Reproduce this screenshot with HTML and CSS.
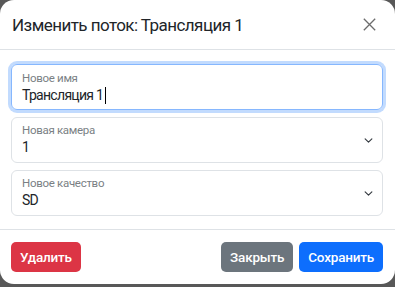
FILE: index.html
```html
<!DOCTYPE html>
<html lang="ru">
<head>
    <meta charset="UTF-8">
    <meta name="viewport" content="width=device-width, initial-scale=1.0">
    <title>Изменить поток</title>
    <link rel="stylesheet" href="styles.css">
</head>
<body>
    <div class="modal">
        <div class="modal-header">
            <h5 class="modal-title">Изменить поток: Трансляция 1</h5>
            <span class="btn-close">
                <svg width="13" height="13" viewBox="0 0 16 16"><path d="M1 1L15 15M15 1L1 15" stroke="#6c6c6c" stroke-width="1.6" fill="none"/></svg>
            </span>
        </div>
        <div class="modal-body">
            <div class="field focused">
                <label>Новое имя</label>
                <div class="value">Трансляция 1<span class="caret"></span></div>
            </div>
            <div class="field select">
                <div>
                    <label>Новая камера</label>
                    <div class="value">1</div>
                </div>
                <svg class="chevron" width="9" height="9" viewBox="0 0 16 16"><path d="M2 5l6 6 6-6" stroke="#343a40" stroke-width="2" fill="none" stroke-linecap="round" stroke-linejoin="round"/></svg>
            </div>
            <div class="field select">
                <div>
                    <label>Новое качество</label>
                    <div class="value">SD</div>
                </div>
                <svg class="chevron" width="9" height="9" viewBox="0 0 16 16"><path d="M2 5l6 6 6-6" stroke="#343a40" stroke-width="2" fill="none" stroke-linecap="round" stroke-linejoin="round"/></svg>
            </div>
        </div>
        <div class="modal-footer">
            <button class="btn btn-danger">Удалить</button>
            <div class="spacer"></div>
            <button class="btn btn-secondary">Закрыть</button>
            <button class="btn btn-primary">Сохранить</button>
        </div>
    </div>
</body>
</html>
```

FILE: styles.css
```css
body {
    margin: 0;
    background: #585858;
    font-family: Roboto, "Noto Sans", sans-serif;
    color: #212529;
}
.modal {
    width: 395px;
    height: 284px;
    background: #fff;
    border-radius: 14px;
    overflow: hidden;
}
.modal-header {
    height: 49px;
    padding: 0 12px;
    display: flex;
    align-items: center;
    justify-content: space-between;
    border-bottom: 1px solid #dee2e6;
}
.modal-title {
    margin: 0;
    font-size: 17px;
    font-weight: 400;
    letter-spacing: -0.55px;
}
.btn-close {
    display: flex;
    margin-right: 7px;
}
.modal-body {
    padding: 14px 12px 13px 11px;
    display: flex;
    flex-direction: column;
    gap: 7px;
}
.field {
    height: 46px;
    box-sizing: border-box;
    border: 1px solid #dee2e6;
    border-radius: 6px;
    padding: 6px 10px 0 10px;
}
.field.focused {
    border-color: #86b7fe;
    box-shadow: 0 0 0 3px rgba(13, 110, 253, 0.25);
}
.field.select {
    display: flex;
    align-items: center;
    justify-content: space-between;
    padding-top: 0;
}
.field label {
    display: block;
    font-size: 11.5px;
    line-height: 15px;
    letter-spacing: -0.3px;
    color: #7a7f84;
}
.value {
    font-size: 14px;
    line-height: 19px;
    letter-spacing: -0.7px;
    display: flex;
    align-items: center;
}
.caret {
    display: inline-block;
    width: 1px;
    height: 17px;
    background: #000;
    margin-left: 2px;
}
.chevron {
    margin-right: -1px;
}
.modal-footer {
    border-top: 1px solid #dee2e6;
    padding: 12px 12px 0 11px;
    display: flex;
    gap: 6px;
}
.spacer {
    flex: 1;
}
.btn {
    height: 30px;
    padding: 0 9px;
    border: none;
    border-radius: 5px;
    color: #fff;
    font-family: Roboto, "Noto Sans", sans-serif;
    font-size: 13.5px;
    font-weight: 500;
    letter-spacing: -0.2px;
}
.btn-danger {
    background: #dc3545;
}
.btn-secondary {
    background: #6c757d;
}
.btn-primary {
    background: #0d6efd;
}
```
